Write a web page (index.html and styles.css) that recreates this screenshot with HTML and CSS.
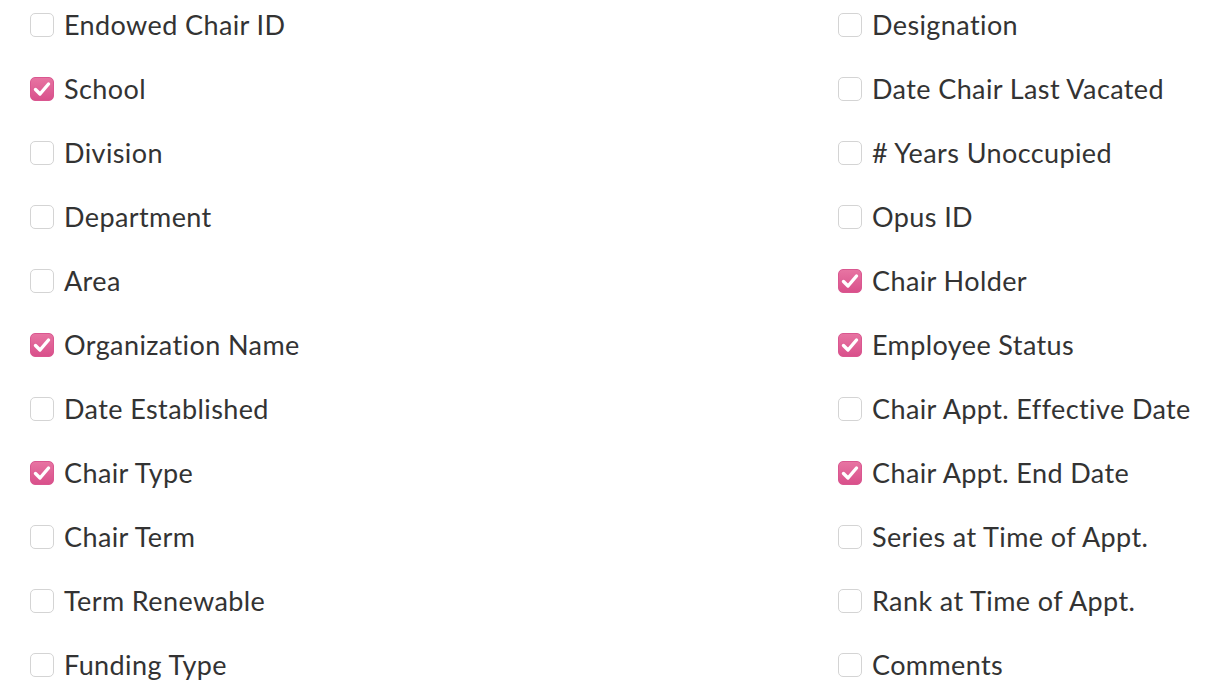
FILE: index.html
```html
<!DOCTYPE html>
<html lang="en">
<head>
<meta charset="utf-8">
<title>Columns</title>
<link rel="stylesheet" href="styles.css">
</head>
<body>
<div class="list">
  <label class="opt"><span class="box"></span><span class="lbl">Endowed Chair ID</span></label>
  <label class="opt"><span class="box"></span><span class="lbl">Designation</span></label>
  <label class="opt"><span class="box on"><svg viewBox="0 0 24 24"><path d="M5.5 12.5l4.5 4.5L18.5 7"/></svg></span><span class="lbl">School</span></label>
  <label class="opt"><span class="box"></span><span class="lbl">Date Chair Last Vacated</span></label>
  <label class="opt"><span class="box"></span><span class="lbl">Division</span></label>
  <label class="opt"><span class="box"></span><span class="lbl"># Years Unoccupied</span></label>
  <label class="opt"><span class="box"></span><span class="lbl">Department</span></label>
  <label class="opt"><span class="box"></span><span class="lbl">Opus ID</span></label>
  <label class="opt"><span class="box"></span><span class="lbl">Area</span></label>
  <label class="opt"><span class="box on"><svg viewBox="0 0 24 24"><path d="M5.5 12.5l4.5 4.5L18.5 7"/></svg></span><span class="lbl">Chair Holder</span></label>
  <label class="opt"><span class="box on"><svg viewBox="0 0 24 24"><path d="M5.5 12.5l4.5 4.5L18.5 7"/></svg></span><span class="lbl">Organization Name</span></label>
  <label class="opt"><span class="box on"><svg viewBox="0 0 24 24"><path d="M5.5 12.5l4.5 4.5L18.5 7"/></svg></span><span class="lbl">Employee Status</span></label>
  <label class="opt"><span class="box"></span><span class="lbl">Date Established</span></label>
  <label class="opt"><span class="box"></span><span class="lbl">Chair Appt. Effective Date</span></label>
  <label class="opt"><span class="box on"><svg viewBox="0 0 24 24"><path d="M5.5 12.5l4.5 4.5L18.5 7"/></svg></span><span class="lbl">Chair Type</span></label>
  <label class="opt"><span class="box on"><svg viewBox="0 0 24 24"><path d="M5.5 12.5l4.5 4.5L18.5 7"/></svg></span><span class="lbl">Chair Appt. End Date</span></label>
  <label class="opt"><span class="box"></span><span class="lbl">Chair Term</span></label>
  <label class="opt"><span class="box"></span><span class="lbl">Series at Time of Appt.</span></label>
  <label class="opt"><span class="box"></span><span class="lbl">Term Renewable</span></label>
  <label class="opt"><span class="box"></span><span class="lbl">Rank at Time of Appt.</span></label>
  <label class="opt"><span class="box"></span><span class="lbl">Funding Type</span></label>
  <label class="opt"><span class="box"></span><span class="lbl">Comments</span></label>
</div>
</body>
</html>
```

FILE: styles.css
```css
html, body {
  margin: 0;
  padding: 0;
  background: #ffffff;
}
body {
  font-family: "Lato", "Open Sans", sans-serif;
  color: #333333;
  overflow: hidden;
}
.list {
  display: grid;
  grid-template-columns: 808px 1fr;
  grid-auto-rows: 64px;
  padding-left: 30px;
  margin-top: -7px;
}
.opt {
  display: flex;
  align-items: center;
  gap: 10px;
}
.box {
  width: 22px;
  height: 22px;
  border: 1px solid #d4d4d4;
  border-radius: 5px;
  background: #ffffff;
  flex: none;
  display: flex;
  align-items: center;
  justify-content: center;
  box-sizing: content-box;
}
.box.on {
  border-color: #da5790;
  background: linear-gradient(#e774a2, #d9508b);
}
.box svg {
  width: 24px;
  height: 24px;
  flex: none;
}
.box svg path {
  fill: none;
  stroke: #ffffff;
  stroke-width: 3.4;
  stroke-linecap: round;
  stroke-linejoin: round;
}
.lbl {
  font-size: 27px;
  line-height: 30px;
  letter-spacing: 0.4px;
}
```
